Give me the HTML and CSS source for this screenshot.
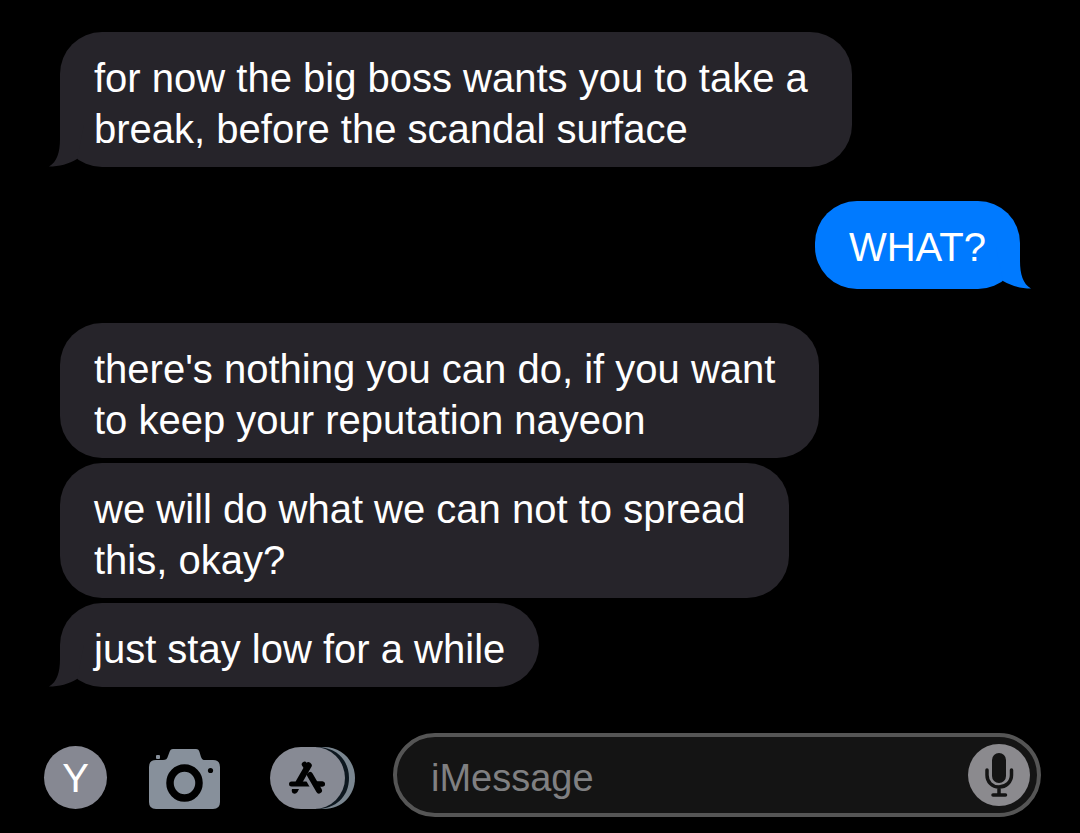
FILE: index.html
```html
<!DOCTYPE html>
<html lang="en">
<head>
<meta charset="UTF-8" />
<meta name="viewport" content="width=device-width, initial-scale=1" />
<title>Messages</title>
<link rel="stylesheet" href="styles.css">
</head>
<body>

<main class="chat">
  <div class="group received">
    <p class="bubble">for now the big boss wants you to take a<br>break, before the scandal surface
      <svg class="tail" viewBox="0 0 44 42" aria-hidden="true"><path d="M12 0V14C12 27 9 37 1 41.5C11 41.5 21 39 29 34L36 0Z"/></svg>
    </p>
  </div>

  <div class="group sent">
    <p class="bubble short">WHAT?
      <svg class="tail" viewBox="0 0 44 42" aria-hidden="true"><path d="M32 0V14C32 27 35 37 43 41.5C33 41.5 24 39 15 34L8 0Z"/></svg>
    </p>
  </div>

  <div class="group received">
    <p class="bubble">there's nothing you can do, if you want<br>to keep your reputation nayeon</p>
    <p class="bubble">we will do what we can not to spread<br>this, okay?</p>
    <p class="bubble short">just stay low for a while
      <svg class="tail" viewBox="0 0 44 42" aria-hidden="true"><path d="M12 0V14C12 27 9 37 1 41.5C11 41.5 21 39 29 34L36 0Z"/></svg>
    </p>
  </div>
</main>

<form class="composer">
  <button type="button" class="avatar">Y</button>

  <button type="button" class="camera" aria-label="Camera">
    <svg width="71" height="60" viewBox="0 0 71 60">
      <path fill="#87909b" d="M7 11H14C17 11 18 10 19 7L20.500 3C21.200 1 22 0 24 0H47C49 0 50 1 50.500 3L52 8C53 10.500 54 11 56 11H64Q71 11 71 18V53Q71 60 64 60H7Q0 60 0 53V18Q0 11 7 11Z"/>
      <rect x="7" y="6" width="4" height="4" rx="1" fill="#87909b"/>
      <ellipse cx="35.500" cy="34" rx="14.500" ry="15" fill="#87909b" stroke="#000" stroke-width="7.500"/>
      <circle cx="61.500" cy="21.500" r="2.600" fill="#000"/>
    </svg>
  </button>

  <button type="button" class="apps" aria-label="Apps">
    <svg width="85" height="62" viewBox="0 0 85 62">
      <path fill="#7a8690" d="M44 0H54C72 0 85 14 85 31S72 62 54 62H44Z"/>
      <path fill="#0d171f" d="M46 0H50C69 2 79 15 79 31S69 60 50 62H46Z"/>
      <rect width="75" height="62" rx="31" fill="#878a94"/>
      <g fill="none" stroke="#000" stroke-width="5" stroke-linecap="round">
        <path d="M21.500 37H52.500"/>
        <path stroke="#878a94" stroke-width="9" stroke-linecap="butt" d="M36.500 25L46 42"/>
        <path stroke-width="6.500" d="M38.500 18.500L29 35"/>
        <path stroke-width="5.500" d="M34.500 17.500L37 21"/>
        <path stroke-width="6" d="M40 28L49 43.500"/>
        <path d="M46 37H52"/>
      </g>
      <path d="M22 42H29L27.500 45Q25.500 48 22.500 46Q21 44.500 22 42Z"/>
    </svg>
  </button>

  <div class="field">
    <input type="text" placeholder="iMessage" aria-label="iMessage">
    <button type="button" class="mic" aria-label="Dictate">
      <svg width="62" height="62" viewBox="0 0 62 62">
        <circle cx="31" cy="31" r="31" fill="#8b8a8e"/>
        <rect x="24" y="9" width="14" height="30" rx="7" fill="#141414"/>
        <path fill="none" stroke="#141414" stroke-width="3.500" stroke-linecap="round" d="M19 26V31C19 38 24 43 31 43S43.500 38 43.500 31V26M31 43V51M25 51H37.500"/>
      </svg>
    </button>
  </div>
</form>

</body>
</html>
```

FILE: styles.css
```css
* {
  box-sizing: border-box;
}
body {
  margin: 0;
  background: #000;
  color: #fff;
  font-family: "Liberation Sans", Arial, sans-serif;
}
button {
  padding: 0;
  border: 0;
  background: none;
  color: inherit;
  font: inherit;
  flex: none;
  cursor: pointer;
}
svg {
  display: block;
}

/* conversation */
.chat {
  display: flex;
  flex-direction: column;
  gap: 34px;
  padding: 32px 60px 46px;
}
.group {
  display: flex;
  flex-direction: column;
  align-items: flex-start;
  gap: 5px;
}
.bubble {
  position: relative;
  margin: 0;
  padding: 21px 44px 12px 34px;
  border-radius: 42px;
  background: #26242a;
  font-size: 40px;
  line-height: 51px;
}
.short {
  padding-right: 34px;
}
.sent {
  align-items: flex-end;
}
.sent .bubble {
  padding-bottom: 16px;
  background: #007aff;
}
.tail {
  position: absolute;
  bottom: 0;
  left: -12px;
  width: 44px;
  height: 42px;
  fill: #26242a;
}
.sent .tail {
  left: auto;
  right: -12px;
  fill: #007aff;
}

/* bottom bar */
.composer {
  display: flex;
  align-items: flex-end;
  padding: 0 39px 16px 44px;
}
.avatar,
.camera,
.apps {
  margin-bottom: 8px;
}
.avatar {
  width: 63px;
  height: 63px;
  padding-top: 2px;
  border-radius: 50%;
  background: #868892;
  font-size: 40px;
}
.camera {
  margin-left: 42px;
  margin-right: 50px;
}
.field {
  flex: 1;
  display: flex;
  align-items: center;
  min-width: 0;
  height: 84px;
  margin-left: 38px;
  padding: 0 7px 0 34px;
  border: 4px solid #555;
  border-radius: 42px;
  background: #141414;
}
.field input {
  flex: 1;
  min-width: 0;
  height: 51px;
  padding: 6px 0 0;
  border: 0;
  outline: 0;
  background: none;
  color: #fff;
  font: inherit;
  font-size: 38px;
}
.field input::placeholder {
  color: #808082;
  opacity: 1;
}
```
